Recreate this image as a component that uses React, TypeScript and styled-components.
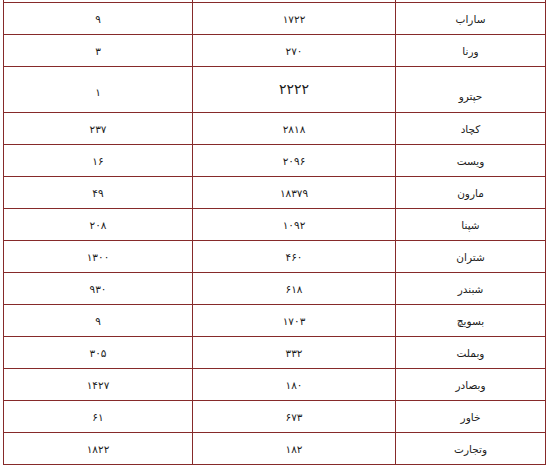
import styled, { createGlobalStyle } from "styled-components";

const GlobalStyle = createGlobalStyle`
  html, body {
    margin: 0;
    padding: 0;
    background: #ffffff;
    overflow: hidden;
  }
`;

const Page = styled.div`
  width: 549px;
  height: 465px;
  overflow: hidden;
  padding: 0 4px 0 3px;
  box-sizing: border-box;
  font-family: "DejaVu Sans", "Noto Sans", sans-serif;
`;

const Table = styled.table`
  direction: rtl;
  width: 543px;
  table-layout: fixed;
  border-collapse: collapse;
`;

const NameCol = styled.col`
  width: 150px;
`;

const MidCol = styled.col`
  width: 203px;
`;

const Row = styled.tr<{ $tall?: boolean; $stub?: boolean }>`
  height: ${(p) => (p.$stub ? "2px" : p.$tall ? "46px" : "32px")};
`;

const Cell = styled.td<{ $big?: boolean; $pushDown?: number; $stub?: boolean }>`
  border: 1px solid #862a2a;
  border-top: ${(p) => (p.$stub ? "0" : "1px solid #862a2a")};
  padding: ${(p) => (p.$stub ? "0" : `${p.$pushDown ?? 3}px 4px 0 4px`)};
  text-align: center;
  vertical-align: middle;
  font-size: ${(p) => (p.$big ? "14px" : "10.5px")};
  color: #1c1c1c;
  line-height: 1.2;
  white-space: nowrap;
`;

type Item = { name: string; volume: string; count: string; tall?: boolean };

const rows: Item[] = [
  { name: "ساراب", volume: "۱۷۲۲", count: "۹" },
  { name: "ورنا", volume: "۲۷۰", count: "۳" },
  { name: "حپترو", volume: "۲۲۲۲", count: "۱", tall: true },
  { name: "کچاد", volume: "۲۸۱۸", count: "۲۳۷" },
  { name: "ویست", volume: "۲۰۹۶", count: "۱۶" },
  { name: "مارون", volume: "۱۸۳۷۹", count: "۴۹" },
  { name: "شپنا", volume: "۱۰۹۲", count: "۲۰۸" },
  { name: "شتران", volume: "۴۶۰", count: "۱۳۰۰" },
  { name: "شبندر", volume: "۶۱۸", count: "۹۳۰" },
  { name: "بسویچ", volume: "۱۷۰۳", count: "۹" },
  { name: "وبملت", volume: "۳۳۲", count: "۳۰۵" },
  { name: "وبصادر", volume: "۱۸۰", count: "۱۴۲۷" },
  { name: "خاور", volume: "۶۷۳", count: "۶۱" },
  { name: "وتجارت", volume: "۱۸۲", count: "۱۸۲۲" },
];

export default function App() {
  return (
    <>
      <GlobalStyle />
      <Page>
        <Table>
          <colgroup>
            <NameCol />
            <MidCol />
            <col />
          </colgroup>
          <tbody>
            <Row $stub>
              <Cell $stub />
              <Cell $stub />
              <Cell $stub />
            </Row>
            {rows.map((r) => (
              <Row key={r.name} $tall={r.tall}>
                <Cell $pushDown={r.tall ? 14 : 3}>{r.name}</Cell>
                <Cell $big={r.tall} $pushDown={r.tall ? 0 : 3}>
                  {r.volume}
                </Cell>
                <Cell $pushDown={r.tall ? 6 : 3}>{r.count}</Cell>
              </Row>
            ))}
            <Row>
              <Cell />
              <Cell />
              <Cell />
            </Row>
          </tbody>
        </Table>
      </Page>
    </>
  );
}
